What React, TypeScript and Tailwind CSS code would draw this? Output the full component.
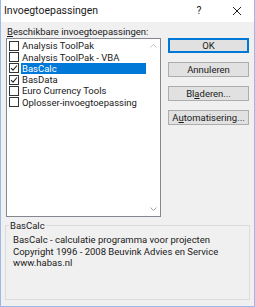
import React from "react";

const items = [
  { name: "Analysis ToolPak", checked: false },
  { name: "Analysis ToolPak - VBA", checked: false },
  { name: "BasCalc", checked: true, selected: true },
  { name: "BasData", checked: true },
  { name: "Euro Currency Tools", checked: false },
  { name: "Oplosser-invoegtoepassing", checked: false },
];

const Check = ({ on }: { on: boolean }) => (
  <span className="w-[10px] h-[10px] border border-[#333] bg-white flex items-center justify-center shrink-0">
    {on && (
      <svg width="8" height="8" viewBox="0 0 8 8">
        <path d="M1 4.2 L3 6.2 L7 1.5" fill="none" stroke="#222" strokeWidth="1.1" />
      </svg>
    )}
  </span>
);

const Btn = ({ label, primary }: { label: React.ReactNode; primary?: boolean }) => (
  <button
    className={`w-[81px] h-[15px] flex items-center justify-center text-[9.5px] leading-none bg-[#e1e1e1] ${
      primary ? "border-2 border-[#0078d7]" : "border border-[#adadad]"
    }`}
  >
    {label}
  </button>
);

export default function App() {
  return (
    <div
      className="w-[255px] h-[307px] bg-[#f0f0f0] border-x border-b border-[#9bb9e6] flex flex-col text-[#1a1a1a]"
      style={{ fontFamily: 'Roboto, "Noto Sans", sans-serif' }}
    >
      {/* title bar */}
      <div className="h-[22px] bg-white flex items-center pl-[3px] pr-[12px] text-[10.5px]">
        <span className="flex-1">Invoegtoepassingen</span>
        <span className="w-[10px] text-center mr-[28px]">?</span>
        <svg width="10" height="10" viewBox="0 0 10 10">
          <path d="M1 1 L9 9 M9 1 L1 9" stroke="#222" strokeWidth="1" />
        </svg>
      </div>

      <div className="flex pl-[5px] pt-[4px] gap-[7px]">
        {/* list column */}
        <div className="flex flex-col w-[155px]">
          <div className="text-[9.5px] leading-[11.2px] pl-[1px] mb-[1px]">
            <u>B</u>eschikbare invoegtoepassingen:
          </div>
          <div className="h-[179px] bg-white border border-[#828790] flex">
            <div className="flex-1 flex flex-col pt-[1px]">
              {items.map((it) => (
                <div key={it.name} className="h-[11.3px] flex items-center gap-[2px] pl-[2px] text-[9.5px] leading-[11.2px]">
                  <Check on={it.checked} />
                  <span
                    className={`h-full flex items-center flex-1 pl-[1px] ${
                      it.selected ? "bg-[#0078d7] text-white" : ""
                    }`}
                  >
                    {it.name}
                  </span>
                </div>
              ))}
            </div>
            <div className="w-[14px] flex flex-col justify-between items-center py-[5px]">
              <svg width="7" height="4" viewBox="0 0 7 4">
                <path d="M0.5 3.5 L3.5 0.5 L6.5 3.5" fill="none" stroke="#c2c2c2" />
              </svg>
              <svg width="7" height="4" viewBox="0 0 7 4">
                <path d="M0.5 0.5 L3.5 3.5 L6.5 0.5" fill="none" stroke="#a0a0a0" />
              </svg>
            </div>
          </div>
        </div>

        {/* buttons */}
        <div className="flex flex-col gap-[9px] pt-[12px]">
          <Btn label="OK" primary />
          <Btn label="Annuleren" />
          <Btn label={<>Bl<u>a</u>deren...</>} />
          <Btn label={<>A<u>u</u>tomatisering...</>} />
        </div>
      </div>

      {/* description */}
      <fieldset className="mx-[4px] mt-[3px] h-[80px] border border-[#dcdcdc] px-[6px]">
        <legend className="text-[9.5px] leading-[11.2px] px-[1px] -ml-[3px]">BasCalc</legend>
        <div className="text-[9.5px] leading-[11.2px] pt-[3px] pl-[1px]">
          <div>BasCalc - calculatie programma voor projecten</div>
          <div>Copyright 1996 - 2008 Beuvink Advies en Service</div>
          <div>www.habas.nl</div>
        </div>
      </fieldset>
    </div>
  );
}
